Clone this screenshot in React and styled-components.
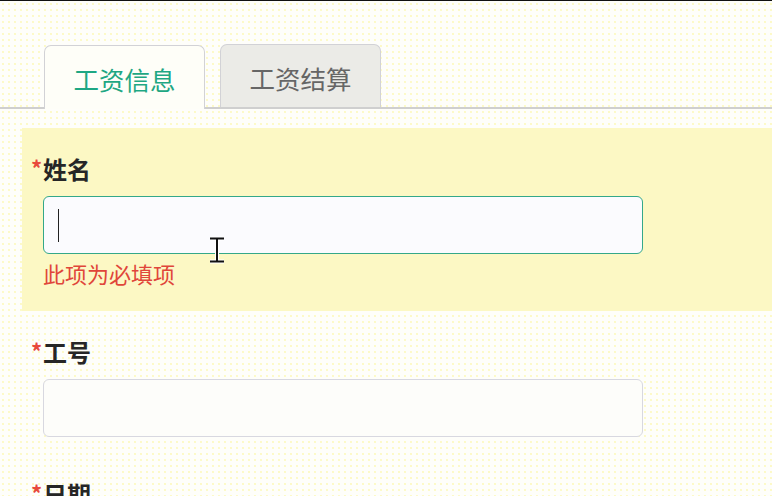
import React from "react";
import styled, { createGlobalStyle } from "styled-components";

const Global = createGlobalStyle`
  html, body { margin: 0; padding: 0; }
  body {
    background: #fefef4;
    font-family: "Noto Sans CJK SC", "Noto Sans", sans-serif;
  }
`;

const Page = styled.div`
  position: relative;
  width: 772px;
  height: 496px;
  overflow: hidden;
  border-top: 1px solid #111;
  box-sizing: border-box;
  background-color: #fefefa;
  background-image: radial-gradient(#fbf590 0.6px, transparent 0.8px);
  background-size: 6px 6px;
`;

const TabBar = styled.div`
  display: flex;
  gap: 15px;
  padding: 43px 0 0 44px;
  border-bottom: 2px solid #cfcfcf;
  height: 63px;
`;

const Tab = styled.div`
  width: 161px;
  height: ${(p) => (p.$active ? "64px" : "63px")};
  margin-top: ${(p) => (p.$active ? "1px" : "0")};
  margin-bottom: ${(p) => (p.$active ? "-2px" : "0")};
  box-sizing: border-box;
  border: 1px solid #d2d2d6;
  border-bottom: none;
  border-radius: 7px 7px 0 0;
  background: ${(p) => (p.$active ? "#fefef8" : "#ebebe7")};
  color: ${(p) => (p.$active ? "#1ea783" : "#666")};
  font-size: 25.5px;
  display: flex;
  align-items: center;
  justify-content: center;
  padding-top: 2px;
`;

const Form = styled.div`
  padding-top: 19px;
`;

const Field = styled.div`
  margin-left: 22px;
  padding: 26px 0 16px 21px;
  background: ${(p) => (p.$highlight ? "#fcf8c4" : "transparent")};
`;

const Label = styled.div`
  display: flex;
  align-items: flex-start;
  font-size: 24px;
  font-weight: 700;
  line-height: 30px;
  color: #262626;
`;

const Star = styled.span`
  width: 12px;
  margin-left: -12px;
  color: #e8493b;
  font-size: 22px;
  line-height: 26px;
`;

const InputBox = styled.div`
  margin-top: 12px;
  width: 600px;
  height: 58px;
  box-sizing: border-box;
  border: 1px solid ${(p) => (p.$focused ? "#34a889" : "#d8d8e0")};
  border-radius: 6px;
  background: ${(p) => (p.$focused ? "#fbfbfe" : "#fdfdfa")};
  display: flex;
  align-items: center;
  padding-left: 14px;
`;

const Caret = styled.span`
  width: 1px;
  height: 33px;
  background: #222;
`;

const Error = styled.div`
  margin: 6px 0 9px;
  font-size: 22px;
  line-height: 26px;
  color: #e0463a;
`;

const Cursor = styled.svg`
  position: absolute;
  left: 209px;
  top: 235px;
`;

export default function App() {
  return (
    <>
      <Global />
      <Page>
        <TabBar>
          <Tab $active>工资信息</Tab>
          <Tab>工资结算</Tab>
        </TabBar>
        <Form>
          <Field $highlight>
            <Label>
              <Star>*</Star>姓名
            </Label>
            <InputBox $focused>
              <Caret />
            </InputBox>
            <Error>此项为必填项</Error>
          </Field>
          <Field>
            <Label>
              <Star>*</Star>工号
            </Label>
            <InputBox />
          </Field>
          <Field>
            <Label>
              <Star>*</Star>日期
            </Label>
          </Field>
        </Form>
        <Cursor width="16" height="28" viewBox="0 0 16 28">
          <path d="M1 2.5H15M8 2.5V25.5M1 25.5H15" stroke="#fff" strokeWidth="4" fill="none" />
          <path d="M1 2.5H15M8 2.5V25.5M1 25.5H15" stroke="#111" strokeWidth="2" fill="none" />
        </Cursor>
      </Page>
    </>
  );
}
